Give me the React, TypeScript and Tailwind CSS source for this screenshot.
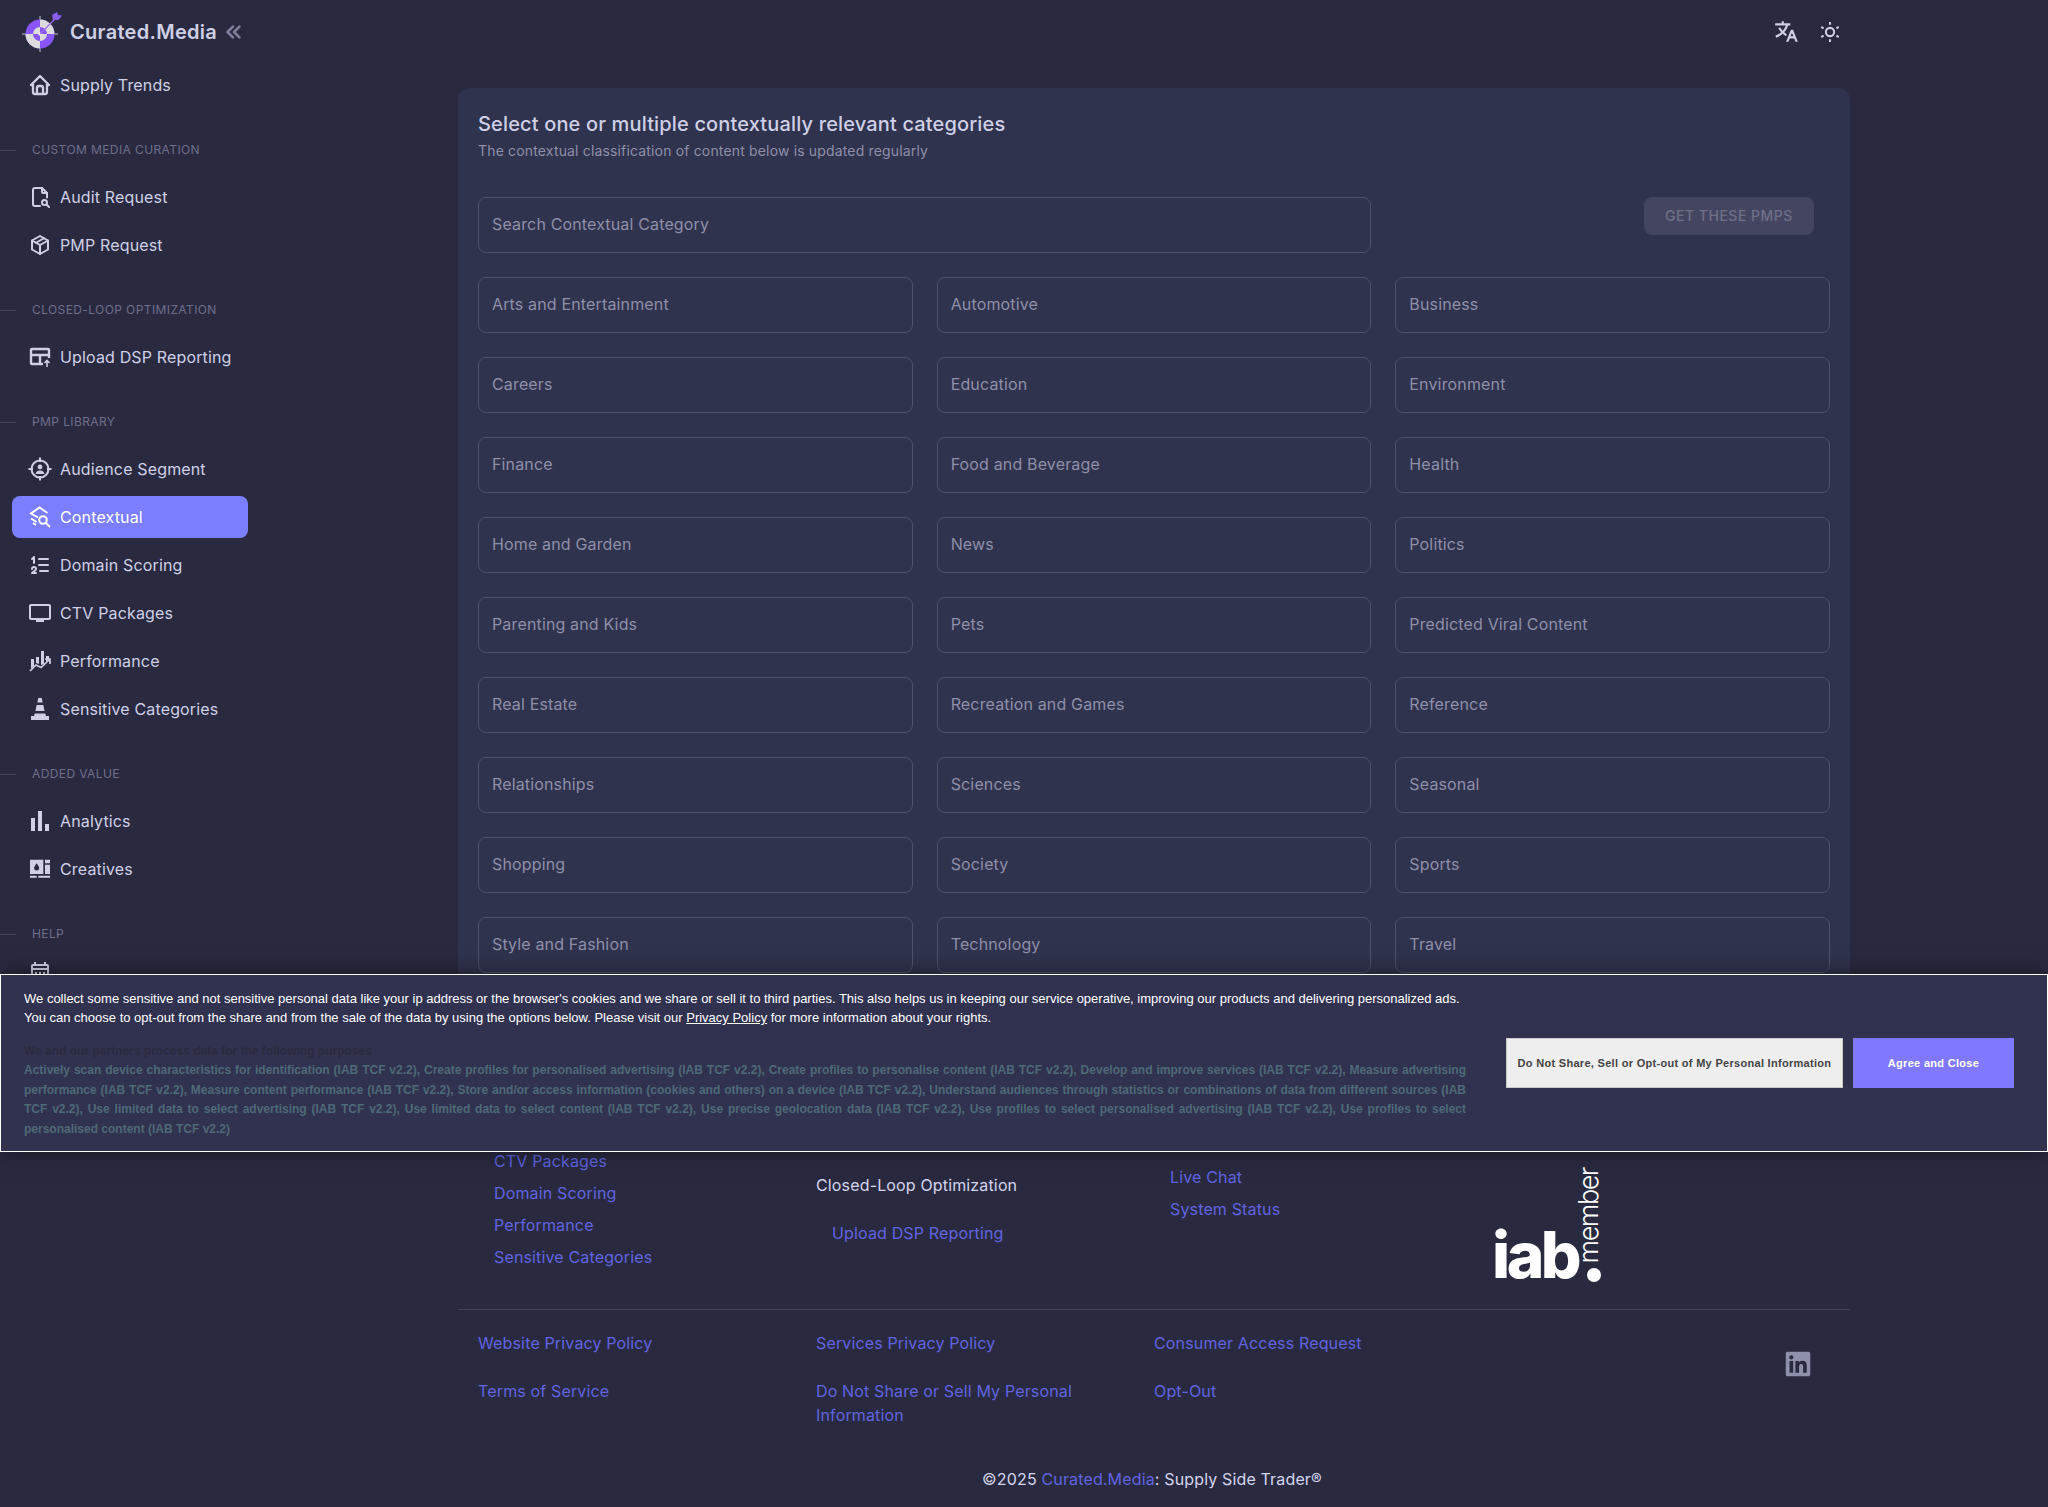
import type { ReactNode } from 'react';
import { FaLinkedin } from 'react-icons/fa';
import { MdOutlineCalendarMonth, MdOutlineTv } from 'react-icons/md';
import { RiTranslate2 } from 'react-icons/ri';
import { TbChevronsLeft, TbFileSearch, TbHome, TbListNumbers, TbPackage } from 'react-icons/tb';

const categories = [
  'Arts and Entertainment', 'Automotive', 'Business',
  'Careers', 'Education', 'Environment',
  'Finance', 'Food and Beverage', 'Health',
  'Home and Garden', 'News', 'Politics',
  'Parenting and Kids', 'Pets', 'Predicted Viral Content',
  'Real Estate', 'Recreation and Games', 'Reference',
  'Relationships', 'Sciences', 'Seasonal',
  'Shopping', 'Society', 'Sports',
  'Style and Fashion', 'Technology', 'Travel',
];

function UploadTableIcon() {
  return (
    <svg viewBox="0 0 24 24" className="w-6 h-6" fill="none" stroke="currentColor" strokeWidth="2.400">
      <path d="M15 19H4a1 1 0 0 1-1-1V5a1 1 0 0 1 1-1h16a1 1 0 0 1 1 1v8M3 10h18M12 10v9" />
      <path d="M19 22v-6M16.500 18l2.500-2.500 2.500 2.500" strokeWidth="1.600" />
    </svg>
  );
}

function AudienceIcon() {
  return (
    <svg viewBox="0 0 24 24" className="w-6 h-6" fill="none" stroke="currentColor" strokeWidth="2">
      <circle cx="12" cy="12" r="8.500" />
      <path d="M12 .5v4.500M12 19v4.500M.5 12H5M19 12h4.500" />
      <circle cx="12" cy="10" r="2.400" fill="currentColor" stroke="none" />
      <path d="M7.500 17c.5-2.400 2.300-3.500 4.500-3.500s4 1.100 4.500 3.500z" fill="currentColor" stroke="none" />
    </svg>
  );
}

function ContextualIcon() {
  return (
    <svg viewBox="0 0 24 24" className="w-6 h-6" fill="none" stroke="currentColor" strokeWidth="2">
      <path d="M10 12.500 3 8.500l8.500-6 8 5.500" />
      <path d="m3 13.500 5.500 3.500M5 18l3 2" />
      <circle cx="15" cy="15" r="3.800" />
      <path d="m18 18 4 4" />
    </svg>
  );
}

function PerformanceIcon() {
  return (
    <svg viewBox="0 0 24 24" className="w-6 h-6" fill="currentColor">
      <path d="M3 10h3v7l-3 3zM8 8h3v7l-3-1zM13 2h3v13l-3 1zM18 7h3v3l-3 3z" />
      <path d="m2 22 6-6 5 2.500 8-7.500M17 10h5v5" fill="none" stroke="currentColor" strokeWidth="1.700" />
    </svg>
  );
}

function ConeIcon() {
  return (
    <svg viewBox="0 0 24 24" className="w-6 h-6" fill="currentColor">
      <path d="M10.300 1h3.400l1 4.500H9.300zM8.700 8h6.600l1.300 6H7.400zM6.800 16.500h10.400l.8 2.500h3v4H3v-4h3z" />
    </svg>
  );
}

function AnalyticsIcon() {
  return (
    <svg viewBox="0 0 24 24" className="w-6 h-6" fill="currentColor">
      <path d="M3 9h4v13H3zM10 2h4v20h-4zM17 15h4v7h-4z" />
    </svg>
  );
}

function CreativesIcon() {
  return (
    <svg viewBox="0 0 24 24" className="w-5 h-5" fill="currentColor">
      <path fillRule="evenodd" d="M0 1h16v17H0zM8 5c-1.800 2.500-3 4-3 5.800a3 3 0 0 0 6 0C11 9 9.800 7.500 8 5z" />
      <path d="M18 1h6v4h-6zM18 7h6v11h-6zM0 20h8v2.500H0zM10 20h14v2.500H10z" />
    </svg>
  );
}

function SunIcon() {
  return (
    <svg viewBox="0 0 24 24" className="w-[22px] h-[22px]" fill="none" stroke="currentColor" strokeWidth="2.200">
      <circle cx="12" cy="12" r="4.500" />
      <path d="M12 1v3M12 20v3M2.500 6.500l2.500 1.500M19 16l2.500 1.500M2.500 17.500 5 16M19 8l2.500-1.500" />
    </svg>
  );
}

function Logo() {
  return (
    <svg viewBox="0 0 48 48" className="w-12 h-12 shrink-0 -ml-1 -mr-1">
      <path d="M24 8v36M6 26h36" stroke="#e6e6ee" strokeWidth="0.800" />
      <circle cx="24" cy="26" r="14.500" fill="#8a55f7" />
      <path d="M24 26h-14.500a14.500 14.500 0 0 0 14.500 14.500z" fill="#dcdcdc" />
      <path d="M24 26V11.500a14.500 14.500 0 0 1 14.500 14.500z" fill="#dcdcdc" />
      <circle cx="24" cy="26" r="7" fill="#dcdcdc" />
      <path d="M24 26V19a7 7 0 0 1 7 7zM24 26v7a7 7 0 0 1-7-7z" fill="#8a55f7" />
      <circle cx="24" cy="26" r="1.600" fill="#fff" />
      <path d="m24 26 15-15" stroke="#9a6cf0" strokeWidth="1.200" />
      <path d="m37 12-1-5 5-3 1 3 4 .5-3.500 4.500z" fill="#8a5cf0" />
    </svg>
  );
}

type NavItem = { label: string; icon: ReactNode; active?: boolean };

const navGroups: { title: string; items: NavItem[] }[] = [
  {
    title: 'Custom Media Curation',
    items: [
      { label: 'Audit Request', icon: <TbFileSearch size={24} /> },
      { label: 'PMP Request', icon: <TbPackage size={24} /> },
    ],
  },
  {
    title: 'Closed-Loop Optimization',
    items: [{ label: 'Upload DSP Reporting', icon: <UploadTableIcon /> }],
  },
  {
    title: 'PMP Library',
    items: [
      { label: 'Audience Segment', icon: <AudienceIcon /> },
      { label: 'Contextual', icon: <ContextualIcon />, active: true },
      { label: 'Domain Scoring', icon: <TbListNumbers size={24} /> },
      { label: 'CTV Packages', icon: <MdOutlineTv size={26} /> },
      { label: 'Performance', icon: <PerformanceIcon /> },
      { label: 'Sensitive Categories', icon: <ConeIcon /> },
    ],
  },
  {
    title: 'Added Value',
    items: [
      { label: 'Analytics', icon: <AnalyticsIcon /> },
      { label: 'Creatives', icon: <CreativesIcon /> },
    ],
  },
];

function NavRow({ item }: { item: NavItem }) {
  return (
    <a
      className={
        item.active
          ? 'mx-3 h-[42px] px-4 flex items-center gap-2 rounded-lg bg-[#7a7eff] text-white text-base tracking-[0.15px] shrink-0'
          : 'mx-3 h-[42px] px-4 flex items-center gap-2 rounded-lg text-[#cfd0e6] text-base tracking-[0.15px] shrink-0'
      }
    >
      <span className="w-6 h-6 flex items-center justify-center shrink-0">{item.icon}</span>
      {item.label}
    </a>
  );
}

function SectionLabel({ title }: { title: string }) {
  return (
    <div className="mt-[34px] mb-[10px] h-5 flex items-center gap-4 text-xs uppercase tracking-[0.4px] text-[#6e6f8a]">
      <span className="w-4 h-px bg-[#44455f]" />
      {title}
    </div>
  );
}

function Sidebar() {
  return (
    <aside className="w-[260px] shrink-0 h-[1100px] overflow-hidden flex flex-col">
      <div className="h-16 pl-5 flex items-center shrink-0">
        <Logo />
        <span className="ml-[10px] text-xl font-semibold text-[#cfd0e6] tracking-[0.3px]">Curated.Media</span>
        <TbChevronsLeft size={26} className="ml-1 text-[#7c7d98]" strokeWidth={2.500} />
      </div>
      <NavRow item={{ label: 'Supply Trends', icon: <TbHome size={24} strokeWidth={2.300} /> }} />
      {navGroups.map((group) => (
        <div key={group.title} className="flex flex-col gap-[6px]">
          <SectionLabel title={group.title} />
          {group.items.map((item) => (
            <NavRow key={item.label} item={item} />
          ))}
        </div>
      ))}
      <SectionLabel title="Help" />
      <span className="ml-7 mt-[6px] text-[#cfd0e6]">
        <MdOutlineCalendarMonth size={24} />
      </span>
    </aside>
  );
}

function CategoryCard() {
  return (
    <section className="bg-[#30334e] rounded-xl px-5 pt-6 h-[905px]">
      <h1 className="text-xl font-medium leading-6 text-[#cfd0e6] tracking-[0.15px]">
        Select one or multiple contextually relevant categories
      </h1>
      <p className="mt-[5px] text-sm leading-5 text-[#8e8fa8] tracking-[0.16px]">
        The contextual classification of content below is updated regularly
      </p>
      <div className="mt-[36px] grid grid-cols-3 gap-x-6 gap-y-6">
        <input
          placeholder="Search Contextual Category"
          className="col-span-2 h-14 px-[13px] pb-[2px] rounded-lg border border-[#4e5070] bg-transparent text-base tracking-[0.15px] placeholder:text-[#8e8fa8] outline-none"
        />
        <div className="flex justify-end pr-4">
          <button className="w-[170px] h-[38px] rounded-lg bg-[#444661] text-[#6f7088] text-sm font-medium uppercase tracking-[0.5px]">
            Get these PMPs
          </button>
        </div>
        {categories.map((name) => (
          <button
            key={name}
            className="h-14 px-[13px] pb-[2px] rounded-lg border border-[#4e5070] text-left text-base tracking-[0.15px] text-[#8e8fa8]"
          >
            {name}
          </button>
        ))}
      </div>
    </section>
  );
}

function FooterLink({ children }: { children: ReactNode }) {
  return <a className="text-base leading-6 tracking-[0.15px] text-[#6163e0]">{children}</a>;
}

function Footer() {
  return (
    <footer>
      <div className="h-[317px] flex items-end border-b border-[#3f405a] pl-5">
        <div className="w-[338px] pl-4 pb-[40px] flex flex-col gap-2">
          <FooterLink>CTV Packages</FooterLink>
          <FooterLink>Domain Scoring</FooterLink>
          <FooterLink>Performance</FooterLink>
          <FooterLink>Sensitive Categories</FooterLink>
        </div>
        <div className="w-[354px] pb-[64px] flex flex-col">
          <span className="text-base leading-6 tracking-[0.15px] text-[#d5d6ee]">Closed-Loop Optimization</span>
          <span className="mt-6 pl-4">
            <FooterLink>Upload DSP Reporting</FooterLink>
          </span>
        </div>
        <div className="w-[325px] pb-[88px] flex flex-col gap-2">
          <FooterLink>Live Chat</FooterLink>
          <FooterLink>System Status</FooterLink>
        </div>
        <div className="-ml-[3px] pb-[27px] flex items-end text-white">
          <span className="text-[64px] leading-[54px] font-extrabold tracking-[-3.500px]">iab</span>
          <span className="flex flex-col items-end -ml-[1px] pr-px">
            <span className="[writing-mode:vertical-rl] rotate-180 text-[27px] leading-6 font-light tracking-[-1.500px]">member</span>
            <span className="mt-[5px] w-[14px] h-[14px] rounded-full bg-white" />
          </span>
        </div>
      </div>
      <div className="pl-5 pt-[21px] flex">
        <div className="w-[338px] flex flex-col gap-6">
          <FooterLink>Website Privacy Policy</FooterLink>
          <FooterLink>Terms of Service</FooterLink>
        </div>
        <div className="w-[338px] pr-[40px] flex flex-col gap-6">
          <FooterLink>Services Privacy Policy</FooterLink>
          <FooterLink>Do Not Share or Sell My Personal Information</FooterLink>
        </div>
        <div className="w-[338px] flex flex-col gap-6">
          <FooterLink>Consumer Access Request</FooterLink>
          <FooterLink>Opt-Out</FooterLink>
        </div>
        <div className="flex-1 flex justify-end pr-[38px] pt-[19px]">
          <FaLinkedin size={28} className="text-[#8f90ab] h-fit" />
        </div>
      </div>
      <p className="mt-[40px] text-center text-base leading-6 tracking-[0.15px] text-[#d5d6ee] -translate-x-[2px]">
        ©2025 <span className="text-[#6163e0]">Curated.Media</span>: Supply Side Trader®
      </p>
    </footer>
  );
}

function CookieBanner() {
  return (
    <div className="absolute left-0 right-0 top-[974px] h-[178px] bg-[#31324f] border border-white shadow-[0_0_20px_rgba(0,0,0,0.5)] flex font-['Liberation_Sans',Arial,sans-serif]">
      <div className="w-[1465px] shrink-0 pl-[23px] pt-[14px]">
        <p className="text-[13px] leading-[19px] text-white">
          We collect some sensitive and not sensitive personal data like your ip address or the browser's cookies and we
          share or sell it to third parties. This also helps us in keeping our service operative, improving our products
          and delivering personalized ads.
          <br />
          You can choose to opt-out from the share and from the sale of the data by using the options below. Please visit
          our <a className="underline">Privacy Policy</a> for more information about your rights.
        </p>
        <p className="mt-[15px] text-xs leading-[19px] font-bold text-[#2a2b3f]">
          We and our partners process data for the following purposes
        </p>
        <p className="text-xs leading-[19.500px] font-bold text-justify text-[#4d6a78]">
          Actively scan device characteristics for identification (IAB TCF v2.2), Create profiles for personalised
          advertising (IAB TCF v2.2), Create profiles to personalise content (IAB TCF v2.2), Develop and improve services
          (IAB TCF v2.2), Measure advertising performance (IAB TCF v2.2), Measure content performance (IAB TCF v2.2), Store
          and/or access information (cookies and others) on a device (IAB TCF v2.2), Understand audiences through
          statistics or combinations of data from different sources (IAB TCF v2.2), Use limited data to select advertising
          (IAB TCF v2.2), Use limited data to select content (IAB TCF v2.2), Use precise geolocation data (IAB TCF v2.2),
          Use profiles to select personalised advertising (IAB TCF v2.2), Use profiles to select personalised content (IAB
          TCF v2.2)
        </p>
      </div>
      <div className="flex-1 pl-[40px] flex items-center gap-[10px]">
        <button className="w-[337px] h-[50px] bg-[#eeeeee] border border-[#c9c9c9] text-[#444444] text-[11px] font-bold tracking-[0.3px]">
          Do Not Share, Sell or Opt-out of My Personal Information
        </button>
        <button className="w-[161px] h-[50px] bg-[#8079ff] text-white text-[11px] font-bold tracking-[0.3px]">
          Agree and Close
        </button>
      </div>
    </div>
  );
}

export default function App() {
  return (
    <div className="relative h-[1507px] overflow-hidden bg-[#292a40] flex font-['Inter',sans-serif]">
      <Sidebar />
      <main className="flex-1 flex justify-center">
        <div className="w-[1392px] flex flex-col">
          <header className="h-[88px] shrink-0 pb-6 flex items-center justify-end gap-[20px] pr-[9px] text-[#cfd0e6]">
            <RiTranslate2 size={26} />
            <SunIcon />
          </header>
          <CategoryCard />
          <Footer />
        </div>
      </main>
      <CookieBanner />
    </div>
  );
}
